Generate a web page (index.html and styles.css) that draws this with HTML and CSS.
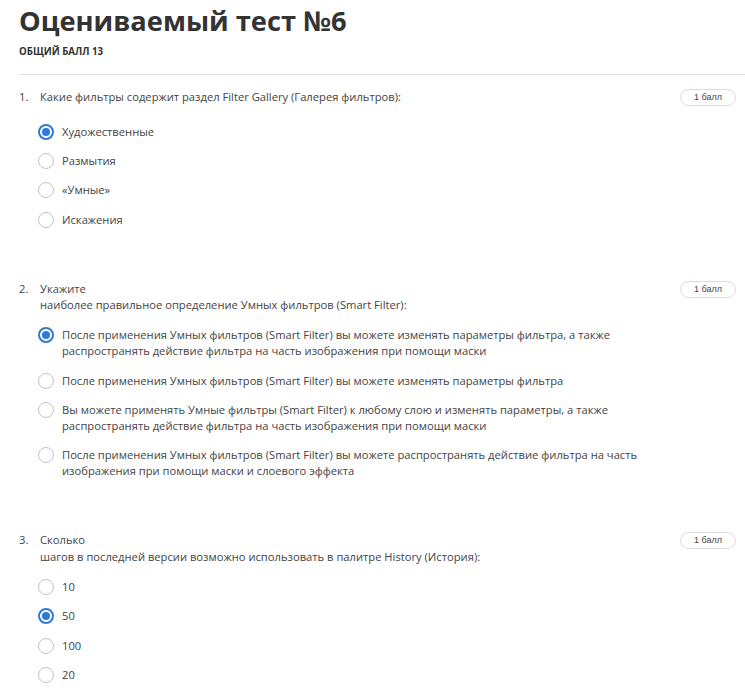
FILE: index.html
```html
<!DOCTYPE html>
<html lang="ru">
<head>
<meta charset="utf-8">
<title>Оцениваемый тест №6</title>
<link rel="stylesheet" href="styles.css">
</head>
<body>
<header class="head">
  <h1 class="title">Оцениваемый тест №6</h1>
  <div class="total">ОБЩИЙ БАЛЛ 13</div>
</header>
<hr class="rule">
<main class="questions">
  <section class="question">
    <div class="num">1.</div>
    <div class="body">
      <div class="qtext">Какие фильтры содержит раздел Filter Gallery (Галерея фильтров):</div>
      <ul class="options">
        <li class="option"><span class="radio checked"></span><span class="otext">Художественные</span></li>
        <li class="option"><span class="radio"></span><span class="otext">Размытия</span></li>
        <li class="option"><span class="radio"></span><span class="otext">«Умные»</span></li>
        <li class="option"><span class="radio"></span><span class="otext">Искажения</span></li>
      </ul>
    </div>
    <div class="badge">1 балл</div>
  </section>
  <section class="question">
    <div class="num">2.</div>
    <div class="body">
      <div class="qtext">Укажите<br>наиболее правильное определение Умных фильтров (Smart Filter):</div>
      <ul class="options">
        <li class="option"><span class="radio checked"></span><span class="otext">После применения Умных фильтров (Smart Filter) вы можете изменять параметры фильтра, а также распространять действие фильтра на часть изображения при помощи маски</span></li>
        <li class="option"><span class="radio"></span><span class="otext">После применения Умных фильтров (Smart Filter) вы можете изменять параметры фильтра</span></li>
        <li class="option"><span class="radio"></span><span class="otext">Вы можете применять Умные фильтры (Smart Filter) к любому слою и изменять параметры, а также распространять действие фильтра на часть изображения при помощи маски</span></li>
        <li class="option"><span class="radio"></span><span class="otext">После применения Умных фильтров (Smart Filter) вы можете распространять действие фильтра на часть изображения при помощи маски и слоевого эффекта</span></li>
      </ul>
    </div>
    <div class="badge">1 балл</div>
  </section>
  <section class="question">
    <div class="num">3.</div>
    <div class="body">
      <div class="qtext">Сколько<br>шагов в последней версии возможно использовать в палитре History (История):</div>
      <ul class="options">
        <li class="option"><span class="radio"></span><span class="otext">10</span></li>
        <li class="option"><span class="radio checked"></span><span class="otext">50</span></li>
        <li class="option"><span class="radio"></span><span class="otext">100</span></li>
        <li class="option"><span class="radio"></span><span class="otext">20</span></li>
      </ul>
    </div>
    <div class="badge">1 балл</div>
  </section>
</main>
</body>
</html>
```
FILE: styles.css
```css
html, body {
  margin: 0;
  padding: 0;
  background: #ffffff;
}
body {
  font-family: "Open Sans", "Noto Sans", sans-serif;
  color: #444444;
  padding-left: 19px;
}
.head {
  padding-top: 4px;
}
.title {
  margin: 0;
  font-size: 27.25px;
  line-height: 34px;
  font-weight: 700;
  color: #333333;
}
.total {
  margin-top: 8px;
  font-size: 9.7px;
  line-height: 12px;
  font-weight: 700;
  color: #333333;
}
.rule {
  margin: 16px 0 0 0;
  border: 0;
  border-top: 1px solid #e2e2e2;
  height: 0;
}
.questions {
  padding: 14px 9px 0 0;
  display: flex;
  flex-direction: column;
  gap: 53px;
}
.question {
  display: flex;
  align-items: flex-start;
}
.num {
  width: 21px;
  flex: none;
  font-size: 11.2px;
  line-height: 16px;
}
.body {
  flex: 1;
  margin-right: 20px;
}
.qtext {
  font-size: 11.2px;
  line-height: 16.5px;
  min-height: 21px;
}
.options {
  list-style: none;
  margin: 13.5px 0 0 -2px;
  padding: 0;
  display: flex;
  flex-direction: column;
  gap: 13.4px;
}
.option {
  display: flex;
  align-items: flex-start;
  gap: 8px;
}
.radio {
  flex: none;
  box-sizing: border-box;
  width: 16px;
  height: 16px;
  border-radius: 50%;
  border: 1.5px solid #c4c4c4;
  background: #ffffff;
  display: flex;
  align-items: center;
  justify-content: center;
}
.radio.checked {
  border: 2px solid #2f7ad8;
}
.radio.checked::after {
  content: "";
  width: 8px;
  height: 8px;
  border-radius: 50%;
  background: #2f7ad8;
}
.otext {
  font-size: 11.2px;
  line-height: 16px;
}
.badge {
  flex: none;
  box-sizing: border-box;
  width: 56px;
  height: 17px;
  border: 1px solid #dcdcdc;
  border-radius: 9px;
  font-family: "Liberation Sans", Arial, sans-serif;
  font-size: 9px;
  line-height: 15px;
  text-align: center;
  color: #444444;
}
```
